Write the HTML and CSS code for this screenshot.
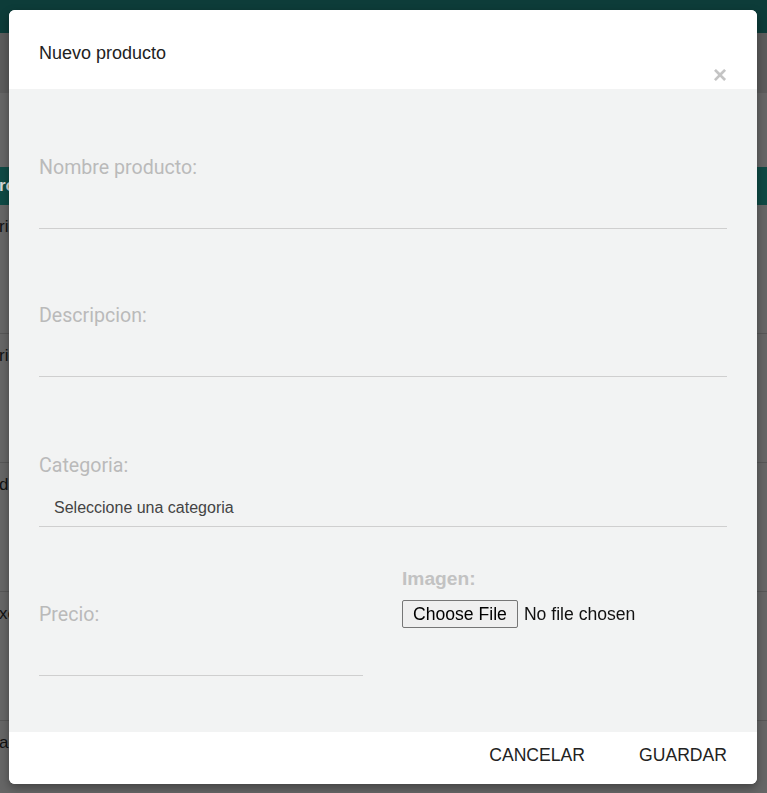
FILE: index.html
```html
<!DOCTYPE html>
<html lang="es">
<head>
<meta charset="utf-8">
<title>Nuevo producto</title>
<link rel="stylesheet" href="styles.css">
</head>
<body>
<div class="page">
  <div class="topbar"></div>
  <div class="navband"></div>
  <div class="spacer"></div>
  <div class="thead"><span class="cell">ro</span></div>
  <div class="trow"><span class="cell">ric</span></div>
  <div class="trow"><span class="cell">ric</span></div>
  <div class="trow"><span class="cell">d</span></div>
  <div class="trow"><span class="cell">xc</span></div>
  <div class="trow"><span class="cell">ac</span></div>
</div>

<div class="modal">
  <div class="modal-header">
    <h4 class="modal-title">Nuevo producto</h4>
    <span class="close">&times;</span>
  </div>
  <div class="modal-body">
    <div class="field f1">
      <label class="lbl">Nombre producto:</label>
      <div class="line"></div>
    </div>
    <div class="field f2">
      <label class="lbl">Descripcion:</label>
      <div class="line"></div>
    </div>
    <div class="field f3">
      <label class="lbl">Categoria:</label>
      <div class="select">Seleccione una categoria</div>
    </div>
    <div class="row">
      <div class="field f4">
        <label class="lbl">Precio:</label>
        <div class="line"></div>
      </div>
      <div class="imgcol">
        <label class="lbl-bold">Imagen:</label>
        <input class="file" type="file">
      </div>
    </div>
  </div>
  <div class="modal-footer">
    <span class="btn">CANCELAR</span>
    <span class="btn">GUARDAR</span>
  </div>
</div>
</body>
</html>
```

FILE: styles.css
```css
html, body {
  margin: 0;
  padding: 0;
}
body {
  width: 767px;
  height: 793px;
  overflow: hidden;
  background: #666666;
  font-family: "Liberation Sans", Arial, sans-serif;
}
.page {
  display: flex;
  flex-direction: column;
  height: 793px;
  overflow: hidden;
}
.topbar {
  height: 33px;
  flex: none;
  background: #0d3c39;
}
.navband {
  height: 60px;
  flex: none;
  background: #5c5c5c;
}
.spacer {
  height: 74px;
  flex: none;
  background: #666666;
}
.thead {
  height: 38px;
  flex: none;
  background: #0f4a45;
  display: flex;
  align-items: center;
}
.thead .cell {
  color: #d8d8d8;
  font-weight: bold;
}
.trow {
  height: 129px;
  flex: none;
  border-bottom: 1px solid #575757;
  display: flex;
  align-items: flex-start;
  box-sizing: border-box;
  padding-top: 12px;
}
.cell {
  margin-left: -1px;
  font-size: 17px;
  line-height: 20px;
  color: #111;
}

.modal {
  position: fixed;
  left: 9px;
  top: 10px;
  width: 748px;
  height: 774px;
  border-radius: 6px;
  overflow: hidden;
  background: #ffffff;
  box-shadow: 0 4px 10px rgba(0,0,0,0.35);
  display: flex;
  flex-direction: column;
}
.modal-header {
  height: 79px;
  flex: none;
  position: relative;
  background: #fff;
  padding: 0 30px;
}
.modal-title {
  margin: 0;
  padding-top: 33px;
  font-size: 18px;
  font-weight: normal;
  color: #222;
  line-height: 20px;
}
.close {
  position: absolute;
  right: 30px;
  top: 53px;
  font-size: 24px;
  font-weight: bold;
  color: #c4c4c4;
  line-height: 24px;
}
.modal-body {
  flex: 1;
  background: #f2f3f3;
  padding: 0 30px;
  display: flex;
  flex-direction: column;
}
.lbl {
  display: block;
  font-family: Roboto, "Liberation Sans", sans-serif;
  font-size: 19.6px;
  line-height: 22px;
  color: #bababa;
}
.line {
  height: 49px;
  border-bottom: 1px solid #cfcfcf;
}
.f1 { margin-top: 68px; }
.f2 { margin-top: 76px; }
.f3 { margin-top: 78px; }
.select {
  border-bottom: 1px solid #cfcfcf;
  box-sizing: border-box;
  height: 50px;
  padding: 21px 0 0 15px;
  font-size: 16px;
  line-height: 20px;
  color: #444;
}
.row {
  display: grid;
  grid-template-columns: 324px 1fr;
  column-gap: 39px;
  margin-top: 41px;
}
.f4 { padding-top: 36px; }
.imgcol {
  display: flex;
  flex-direction: column;
  align-items: flex-start;
}
.lbl-bold {
  font-size: 19.2px;
  font-weight: bold;
  color: #c2c2c2;
  line-height: 22px;
}
.file {
  margin-top: 10px;
  font-family: "Liberation Sans", Arial, sans-serif;
  font-size: 17.6px;
  line-height: 20px;
  color: #111;
}
.file::file-selector-button {
  font: inherit;
  color: #000;
  background: #efefef;
  border: 1px solid #767676;
  border-radius: 2px;
  padding: 3px 10px;
  margin-right: 6px;
}
.modal-footer {
  height: 52px;
  flex: none;
  background: #fff;
  display: flex;
  justify-content: flex-end;
  align-items: center;
  gap: 54px;
  padding: 0 30px 7px;
  box-sizing: border-box;
}
.btn {
  font-size: 17.6px;
  color: #222;
  line-height: 20px;
}
```
